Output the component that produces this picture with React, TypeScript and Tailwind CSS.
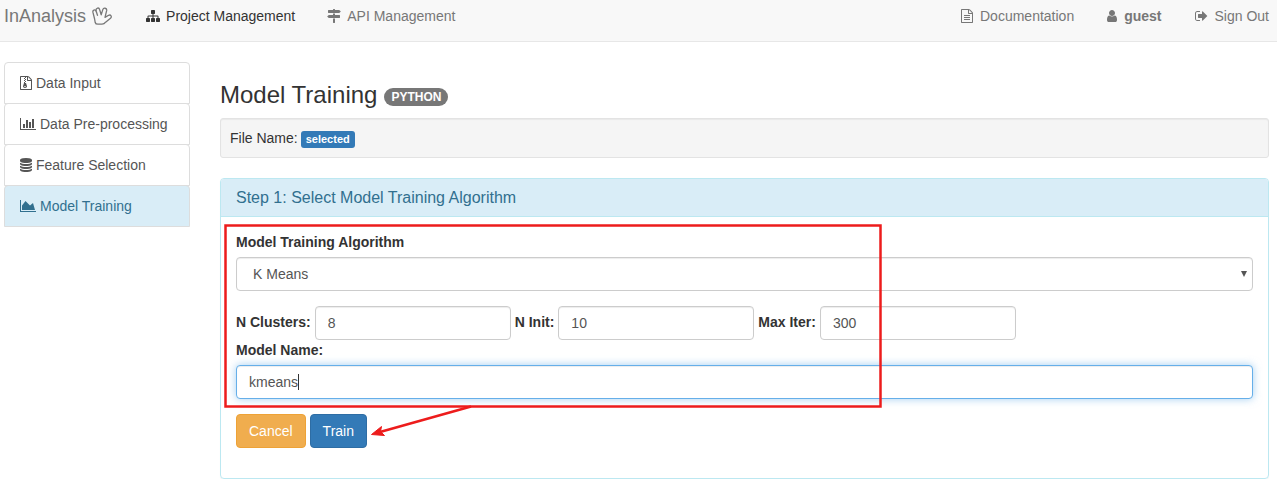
import React from "react";

type IconProps = { d: string; w?: number; className?: string };

// Icons are drawn on a 1792-unit-high grid, 128 units to the pixel at 14px.
function Icon({ d, w = 1792, className = "" }: IconProps) {
  return (
    <svg viewBox={`0 0 ${w} 1792`} className={`inline-block h-[14px] shrink-0 fill-current ${className}`} aria-hidden="true">
      <path d={d} />
    </svg>
  );
}

const FILE =
  "M1468 380q28 28 48 76t20 88v1152q0 40-28 68t-68 28h-1344q-40 0-68-28t-28-68v-1600q0-40 28-68t68-28h896q40 0 88 20t76 48zm-444-244v376h376q-10-29-22-41l-313-313q-12-12-41-22zm384 1528v-1024h-416q-40 0-68-28t-28-68v-416h-768v1536h1280z";
const FILE_TEXT =
  FILE +
  "M384 800q0-14 9-23t23-9h704q14 0 23 9t9 23v64q0 14-9 23t-23 9h-704q-14 0-23-9t-9-23v-64zm736 224q14 0 23 9t9 23v64q0 14-9 23t-23 9h-704q-14 0-23-9t-9-23v-64q0-14 9-23t23-9h704zm0 256q14 0 23 9t9 23v64q0 14-9 23t-23 9h-704q-14 0-23-9t-9-23v-64q0-14 9-23t23-9h704z";
const FILE_ZIP =
  "M640 384v-128h-128v128h128zm128 128v-128h-128v128h128zm-128 128v-128h-128v128h128zm128 128v-128h-128v128h128zm700-388q28 28 48 76t20 88v1152q0 40-28 68t-68 28h-1344q-40 0-68-28t-28-68v-1600q0-40 28-68t68-28h896q40 0 88 20t76 48zm-444-244v376h376q-10-29-22-41l-313-313q-12-12-41-22zm384 1528v-1024h-416q-40 0-68-28t-28-68v-416h-128v128h-128v-128h-512v1536h1280zm-627-721l107 349q8 27 8 52 0 83-72.500 137.500t-183.500 54.500-183.500-54.500-72.500-137.500q0-25 8-52 21-63 120-396v-128h128v128h79q22 0 39 13t23 34zm-141 465q53 0 90.500-19t37.500-45-37.500-45-90.500-19-90.500 19-37.500 45 37.500 45 90.500 19z";
const SITEMAP =
  "M1792 1248v320q0 40-28 68t-68 28h-320q-40 0-68-28t-28-68v-320q0-40 28-68t68-28h96v-192h-512v192h96q40 0 68 28t28 68v320q0 40-28 68t-68 28h-320q-40 0-68-28t-28-68v-320q0-40 28-68t68-28h96v-192h-512v192h96q40 0 68 28t28 68v320q0 40-28 68t-68 28h-320q-40 0-68-28t-28-68v-320q0-40 28-68t68-28h96v-192q0-52 38-90t90-38h512v-192h-96q-40 0-68-28t-28-68v-320q0-40 28-68t68-28h320q40 0 68 28t28 68v320q0 40-28 68t-68 28h-96v192h512q52 0 90 38t38 90v192h96q40 0 68 28t28 68z";
const SIGNS =
  "M1745 297q10 10 10 23t-10 23l-141 141q-28 28-68 28h-1344q-26 0-45-19t-19-45v-256q0-26 19-45t45-19h576v-64q0-26 19-45t45-19h128q26 0 45 19t19 45v64h512q40 0 68 28zm-977 919h256v512q0 26-19 45t-45 19h-128q-26 0-45-19t-19-45v-512zm832-448q26 0 45 19t19 45v256q0 26-19 45t-45 19h-1344q-40 0-68-28l-141-141q-10-10-10-23t10-23l141-141q28-28 68-28h512v-192h256v192h576z";
const USER =
  "M1280 1399q0 109-62.500 187t-150.500 78h-854q-88 0-150.500-78t-62.500-187q0-85 8.500-160.500t31.500-152 58.500-131 94-89 134.500-34.500q131 128 313 128t313-128q76 0 134.500 34.500t94 89 58.500 131 31.500 152 8.500 160.500zm-256-887q0 159-112.500 271.500t-271.500 112.500-271.500-112.500-112.500-271.500 112.500-271.500 271.500-112.500 271.500 112.500 112.500 271.500z";
const SIGN_OUT =
  "M640 1440q0 4 1 20t.5 26.500-3 23.500-10 19.500-20.500 6.500h-320q-119 0-203.500-84.500t-84.500-203.500v-704q0-119 84.500-203.500t203.500-84.500h320q13 0 22.500 9.500t9.500 22.500q0 4 1 20t.5 26.500-3 23.500-10 19.500-20.500 6.500h-320q-66 0-113 47t-47 113v704q0 66 47 113t113 47h312l11.500 1 11.500 3 8 5.500 7 9 2 13.500zm928-544q0 26-19 45l-544 544q-19 19-45 19t-45-19-19-45v-288h-448q-26 0-45-19t-19-45v-384q0-26 19-45t45-19h448v-288q0-26 19-45t45-19 45 19l544 544q19 19 19 45z";
const BARS =
  "M640 896v512h-256v-512h256zm384-512v1024h-256v-1024h256zm1024 1152v128h-2048v-1536h128v1408h1920zm-640-896v768h-256v-768h256zm384-384v1152h-256v-1152h256z";
const AREA = "M2048 1536v128h-2048v-1536h128v1408h1920zm-384-1024l256 896h-1664v-576l448-576 576 576z";
const DATABASE =
  "M768 768q237 0 443-43t325-127v170q0 69-103 128t-280 93.500-385 34.500-385-34.500-280-93.500-103-128v-170q119 84 325 127t443 43zm0 768q237 0 443-43t325-127v170q0 69-103 128t-280 93.500-385 34.500-385-34.500-280-93.500-103-128v-170q119 84 325 127t443 43zm0-384q237 0 443-43t325-127v170q0 69-103 128t-280 93.500-385 34.500-385-34.500-280-93.500-103-128v-170q119 84 325 127t443 43zm0-1152q208 0 385 34.500t280 93.500 103 128v128q0 69-103 128t-280 93.500-385 34.500-385-34.500-280-93.500-103-128v-128q0-69 103-128t280-93.500 385-34.500z";

function Hand() {
  return (
    <svg viewBox="0 0 20 18" className="h-[18px] w-5 fill-none stroke-current" strokeWidth="1.3" strokeLinejoin="round" strokeLinecap="round" aria-hidden="true">
      <path d="M3.200 15.500 L2.600 12 L.9 5.200 C.5 3 2.900 2.200 4 3.800 C3.900 .6 7 .2 7.600 2.500 L9.200 7.800 L10.800 2.600 C11.500 .4 15 .9 14.700 3.400 L13 10.400 L16.600 8.300 C18.800 7.300 20.200 9.600 18.500 11.200 L13.600 15.200 C12.500 16.800 11.500 17.200 10 17.200 L6 17.200 C4.300 17.200 3.500 16.800 3.200 15.500 Z" />
      <path d="M4 3.800 L5.500 8.300" />
    </svg>
  );
}

const steps = [
  { label: "Data Input", d: FILE_ZIP, w: 1536 },
  { label: "Data Pre-processing", d: BARS, w: 2048 },
  { label: "Feature Selection", d: DATABASE, w: 1536 },
  { label: "Model Training", d: AREA, w: 2048, active: true },
];

const params = [
  { id: "clusters", label: "N Clusters:", value: "8" },
  { id: "init", label: "N Init:", value: "10" },
  { id: "iter", label: "Max Iter:", value: "300" },
];

const field =
  "h-[34px] rounded-[4px] border bg-white px-3 text-sm text-[#555] outline-none";
const plain = "border-[#ccc] shadow-[inset_0_1px_1px_rgba(0,0,0,0.075)]";

export default function App() {
  return (
    <div className="font-['Liberation_Sans',Arial,sans-serif] text-sm leading-5 text-[#333]">
      <nav className="flex h-[42px] items-start justify-between border-b border-[#e7e7e7] bg-[#f8f8f8] pr-2 pl-1 text-[#777]">
        <div className="flex items-start pt-1.5">
          <a href="#home" className="flex items-center gap-1.5 text-lg leading-5">
            InAnalysis <Hand />
          </a>
          <a href="#projects" className="ml-[34px] flex items-center gap-1.5 text-[#333]">
            <Icon d={SITEMAP} />Project Management
          </a>
          <a href="#api" className="ml-8 flex items-center gap-1.5">
            <Icon d={SIGNS} />API Management
          </a>
        </div>
        <div className="flex items-start gap-[33px] pt-1.5">
          <a href="#docs" className="flex items-center gap-[7px]"><Icon d={FILE_TEXT} w={1536} />Documentation</a>
          <a href="#user" className="flex items-center gap-[7px] font-bold"><Icon d={USER} w={1280} />guest</a>
          <a href="#signout" className="flex items-center gap-[7px]"><Icon d={SIGN_OUT} w={1664} />Sign Out</a>
        </div>
      </nav>

      <div className="flex items-start gap-[30px] pt-5 pr-2 pl-1">
        <ul className="w-[186px] shrink-0">
          {steps.map((s) => (
            <li key={s.label} className="-mb-px">
              <a
                href="#step"
                className={`flex items-center gap-1 rounded-t-[4px] border border-[#ddd] px-[15px] py-[10px] ${s.active ? "bg-[#d9edf7] text-[#31708f]" : "bg-white text-[#555]"}`}
              >
                <Icon d={s.d} w={s.w} />{s.label}
              </a>
            </li>
          ))}
        </ul>

        <main className="min-w-0 flex-1">
          <h1 className="mt-5 mb-[10px] flex items-center gap-[7px] text-2xl leading-[26px]">
            Model Training
            <span className="mt-1 rounded-full bg-[#777] px-[7px] py-[3px] text-xs leading-3 font-bold text-white">PYTHON</span>
          </h1>
          <div className="flex h-10 items-center gap-[3px] rounded-[3px] border border-[#e3e3e3] bg-[#f5f5f5] px-[9px] shadow-[inset_0_1px_1px_rgba(0,0,0,0.05)]">
            File Name:
            <span className="mt-0.5 rounded-[3px] bg-[#337ab7] px-[5px] py-[3px] text-[11px] leading-[11px] font-bold text-white">selected</span>
          </div>

          <section className="mt-5 rounded-[4px] border border-[#bce8f1] shadow-[0_1px_1px_rgba(0,0,0,0.05)]">
            <h2 className="rounded-t-[3px] border-b border-[#bce8f1] bg-[#d9edf7] px-[15px] pt-[9px] pb-2 text-base leading-5 text-[#31708f]">
              Step 1: Select Model Training Algorithm
            </h2>
            <form className="relative px-[15px] pt-[15px] pb-[30px]" onSubmit={(e) => e.preventDefault()}>
              <label htmlFor="algorithm" className="mb-[5px] block font-bold">Model Training Algorithm</label>
              <div className="relative">
                <select id="algorithm" className={`${field} ${plain} w-full appearance-none pl-4`}>
                  <option>K Means</option>
                </select>
                <svg viewBox="0 0 6 6" className="pointer-events-none absolute top-[14px] right-1.5 size-1.5 fill-[#555]" aria-hidden="true">
                  <path d="M0 0H6L3 6Z" />
                </svg>
              </div>
              <div className="mt-[15px] flex flex-wrap items-center gap-x-1">
                {params.map((p) => (
                  <React.Fragment key={p.id}>
                    <label htmlFor={p.id} className="pb-0.5 font-bold">{p.label}</label>
                    <input id={p.id} defaultValue={p.value} className={`${field} ${plain} w-[196px]`} />
                  </React.Fragment>
                ))}
              </div>
              <label htmlFor="name" className="mb-[5px] block font-bold">Model Name:</label>
              <div className="relative">
                <input
                  id="name"
                  defaultValue="kmeans"
                  className={`${field} w-full border-[#66afe9] shadow-[inset_0_1px_1px_rgba(0,0,0,0.075),0_0_8px_rgba(102,175,233,0.6)]`}
                />
                <span className="absolute top-[9px] left-[62px] h-4 w-px bg-[#333]" />
              </div>
              <div className="mt-[15px] flex gap-1">
                <button type="button" className="h-[34px] rounded-[4px] border border-[#eea236] bg-[#f0ad4e] px-3 text-white">Cancel</button>
                <button type="submit" className="h-[34px] rounded-[4px] border border-[#2e6da4] bg-[#337ab7] px-3 text-white">Train</button>
              </div>
              <svg viewBox="0 0 660 214" className="pointer-events-none absolute top-[7px] left-[3px] h-[214px] w-[660px]" aria-hidden="true">
                <rect x="1.500" y="1.500" width="655" height="181" fill="none" stroke="#ed1c1c" strokeWidth="2.500" />
                <path d="M247 182.500L156 208" stroke="#ed1c1c" strokeWidth="2.500" />
                <path d="M147.500 210.500L157.500 202.500L156.500 207.500L160.500 211.500Z" fill="#ed1c1c" stroke="#ed1c1c" strokeWidth="1" />
              </svg>
            </form>
          </section>
        </main>
      </div>
    </div>
  );
}
